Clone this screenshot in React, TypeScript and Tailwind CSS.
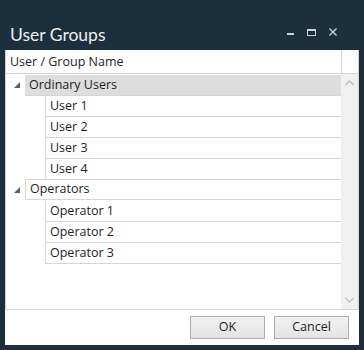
import React from "react";

function Expander() {
  return (
    <svg width="6" height="6" viewBox="0 0 6 6" className="shrink-0">
      <path d="M6 0 L6 6 L0 6 Z" fill="#5f5f5f" />
    </svg>
  );
}

function GroupRow({ name, shaded, outlined }: { name: string; shaded?: boolean; outlined?: boolean }) {
  return (
    <div className="flex h-[21px] box-border">
      <div className="w-[19px] h-full flex items-center justify-center pl-[2px] pb-[1px]">
        <Expander />
      </div>
      <div
        className={`flex-1 h-full flex items-center pl-[4px] border-b border-[#d6d6d6] ${
          shaded ? "bg-[#dddddd]" : ""
        } ${outlined ? "border-l border-t -mt-px h-[22px]" : ""}`}
      >
        {name}
      </div>
    </div>
  );
}

function ChildRow({ name }: { name: string }) {
  return (
    <div className="flex h-[21px]">
      <div className="w-[39px]" />
      <div className="flex-1 h-full flex items-center pl-[4px] border-l border-b border-[#d6d6d6]">{name}</div>
    </div>
  );
}

export default function App() {
  const groups = [
    { name: "Ordinary Users", shaded: true, items: ["User 1", "User 2", "User 3", "User 4"] },
    { name: "Operators", outlined: true, items: ["Operator 1", "Operator 2", "Operator 3"] },
  ];

  return (
    <div
      className="w-[364px] h-[350px] bg-[#1b2f3d] flex flex-col px-[5px] pb-[5px] text-[12.5px] text-[#1e1e1e]"
      style={{ fontFamily: '"Open Sans", "Noto Sans", sans-serif' }}
    >
      {/* Title bar */}
      <div className="h-[50px] shrink-0 flex items-end justify-between">
        <div
          className="pl-[5px] pb-[7px] text-[17.5px] text-[#eeeeee] leading-none"
          style={{ fontFamily: "Lato, sans-serif" }}
        >
          User Groups
        </div>
        <div className="flex items-center gap-[13px] pr-[22px] pb-[14px]">
          <div className="w-[7px] h-[2px] bg-[#cfd4d8] mt-[4px]" />
          <div className="w-[9px] h-[7px] border border-t-2 border-[#cfd4d8]" />
          <svg width="8" height="8" viewBox="0 0 8 8">
            <path d="M0.5 0.5 L7.5 7.5 M7.5 0.5 L0.5 7.5" stroke="#cfd4d8" strokeWidth="1.4" />
          </svg>
        </div>
      </div>

      {/* Client area */}
      <div className="flex-1 bg-white flex flex-col">
        <div className="h-[260px] shrink-0 border-l border-r border-b border-[#d4d4d4] flex flex-col">
          {/* Header */}
          <div className="h-[24px] shrink-0 flex border-b border-[#d4d4d4]">
            <div className="flex-1 flex items-center pl-[4px] pt-[1px] border-r border-[#d4d4d4]">User / Group Name</div>
            <div className="w-[16px]" />
          </div>
          <div className="flex-1 flex">
            <div className="flex-1 pt-[1px]">
              {groups.map((g) => (
                <div key={g.name}>
                  <GroupRow name={g.name} shaded={g.shaded} outlined={g.outlined} />
                  {g.items.map((it) => (
                    <ChildRow key={it} name={it} />
                  ))}
                </div>
              ))}
            </div>
            {/* Scrollbar */}
            <div className="w-[17px] bg-[#f0f0f0] flex flex-col justify-between items-center py-[6px]">
              <svg width="9" height="6" viewBox="0 0 9 6">
                <path d="M0.5 5 L4.5 1 L8.5 5" stroke="#c2c2c2" strokeWidth="1.5" fill="none" />
              </svg>
              <svg width="9" height="6" viewBox="0 0 9 6">
                <path d="M0.5 1 L4.5 5 L8.5 1" stroke="#c2c2c2" strokeWidth="1.2" fill="none" />
              </svg>
            </div>
          </div>
        </div>

        {/* Footer */}
        <div className="flex justify-end gap-[9px] pt-[6px] pr-[10px]">
          <button className="w-[75px] h-[23px] border border-[#acacac] bg-gradient-to-b from-[#f2f2f2] to-[#e4e4e4] text-[#1e1e1e]">
            OK
          </button>
          <button className="w-[75px] h-[23px] border border-[#acacac] bg-gradient-to-b from-[#f2f2f2] to-[#e4e4e4] text-[#1e1e1e]">
            Cancel
          </button>
        </div>
      </div>
    </div>
  );
}
